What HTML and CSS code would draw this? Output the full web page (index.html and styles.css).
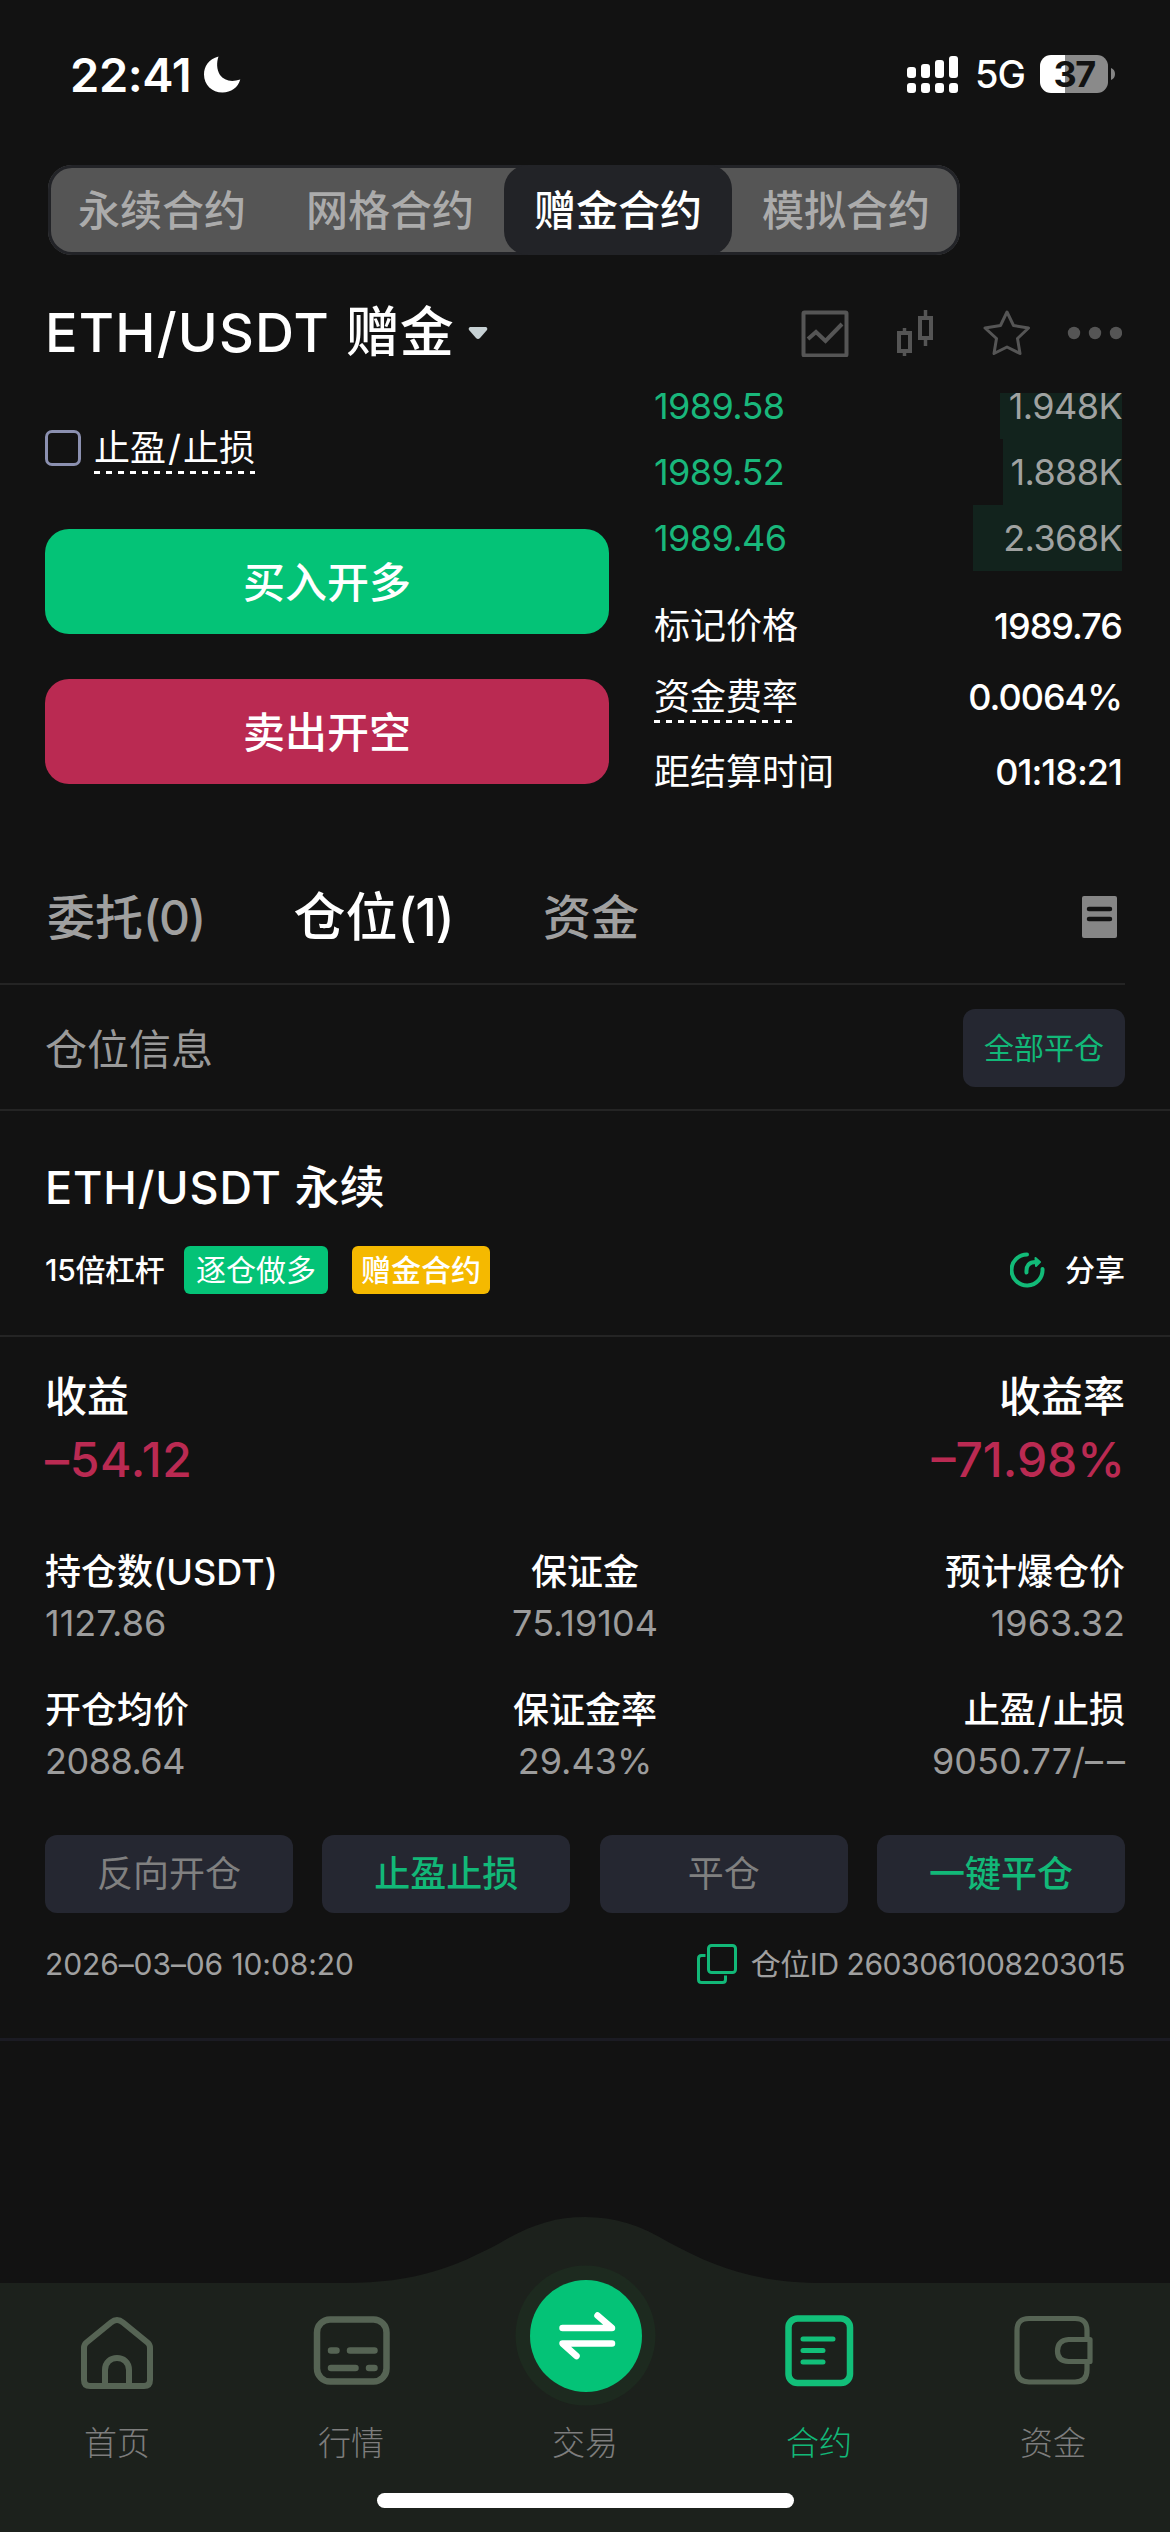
FILE: index.html
```html
<!DOCTYPE html>
<html lang="zh-CN">
<head>
<meta charset="utf-8">
<title>ETH/USDT 赠金合约</title>
<link rel="stylesheet" href="styles.css">
</head>
<body>
<div class="screen">
  <header class="status">
    <div class="status-left">
      <span class="clock">22:41</span>
      <svg class="moon" width="37" height="37" viewBox="0 0 37 37"><path fill="#fff" d="M14.5 0.6C4.5 3 0 11 0 18.500C0 29 8 36.500 18.500 36.500C27 36.500 34 31.500 36.300 23.500C27 26.500 20 24.500 16 19C12.500 13.500 12.500 6.500 14.500 0.600Z"/></svg>
    </div>
    <div class="status-right">
      <svg class="signal" width="52" height="38" viewBox="0 0 52 38" fill="#fff">
        <rect x="0" y="12" width="9" height="11" rx="3"/><rect x="14" y="9" width="9" height="14" rx="3"/><rect x="28" y="5" width="9" height="18" rx="3"/><rect x="42" y="1" width="9" height="22" rx="3"/>
        <rect x="0" y="28" width="9" height="10" rx="3"/><rect x="14" y="28" width="9" height="10" rx="3"/><rect x="28" y="28" width="9" height="10" rx="3"/><rect x="42" y="28" width="9" height="10" rx="3"/>
      </svg>
      <span class="network">5G</span>
      <span class="battery">37</span>
      <svg class="battery-nub" width="4" height="12" viewBox="0 0 4 12"><path d="M0 0Q4 1.500 4 6T0 12Z" fill="#858585"/></svg>
    </div>
  </header>

  <nav class="segments">
    <span class="segment">永续合约</span><span class="segment">网格合约</span><span class="segment active">赠金合约</span><span class="segment">模拟合约</span>
  </nav>

  <section class="pair">
    <h1 class="pair-name">ETH/USDT <span>赠金</span></h1>
    <svg class="caret" width="20" height="12" viewBox="0 0 20 12"><path d="M2 0H18Q20 1 19 3L12 11Q10 13 8 11L1 3Q0 1 2 0Z" fill="#c6d0d3"/></svg>
    <svg class="tools" width="322" height="48" viewBox="0 0 322 48" fill="none" stroke="#555">
      <rect x="3.500" y="3.500" width="43" height="43" rx="1" stroke-width="4"/>
      <path d="M8 30L16 23L25.500 32L42 15" stroke-width="4"/>
      <path d="M104.500 19V23M104.500 43V47M125.500 1V8M125.500 30V37" stroke-width="3.500"/>
      <rect x="99" y="24" width="11" height="18" stroke-width="4"/><rect x="120" y="9" width="11" height="20" stroke-width="4"/>
      <path d="M207 3L213.500 16.500L228.500 19L217.500 29.500L220 44.500L207 38L194 44.500L196.500 29.500L185 19L200.500 16.500Z" stroke-width="3" stroke-linejoin="round"/>
      <g fill="#555" stroke="none"><circle cx="274" cy="24" r="6.200"/><circle cx="295" cy="24" r="6.200"/><circle cx="316" cy="24" r="6.200"/></g>
    </svg>
  </section>

  <section class="trade">
    <div class="order">
      <label class="tpsl"><span class="box"></span><span class="dashed">止盈<span class="slash">/</span>止损</span></label>
      <button class="big buy">买入开多</button>
      <button class="big sell">卖出开空</button>
    </div>
    <div class="book">
      <div class="depth">
        <div class="level"><span class="price">1989.58</span><span class="amount" style="width:122px">1.948K</span></div>
        <div class="level"><span class="price">1989.52</span><span class="amount" style="width:119px">1.888K</span></div>
        <div class="level"><span class="price">1989.46</span><span class="amount" style="width:149px">2.368K</span></div>
      </div>
      <dl class="facts">
        <div><dt>标记价格</dt><dd>1989.76</dd></div>
        <div><dt class="dashed">资金费率</dt><dd class="rate">0.0064%</dd></div>
        <div><dt>距结算时间</dt><dd class="timer">01:18:21</dd></div>
      </dl>
    </div>
  </section>

  <nav class="tabs">
    <span class="tab">委托<span class="count">(0)</span></span><span class="tab current">仓位<span class="count">(1)</span></span><span class="tab">资金</span>
    <svg width="35" height="42" viewBox="0 0 35 42"><rect width="35" height="42" rx="2" fill="#868686"/><path d="M7 13H28M7 23H28" stroke="#121212" stroke-width="4.500" stroke-linecap="round"/></svg>
  </nav>

  <section class="summary"><span class="summary-title">仓位信息</span><button class="close-all">全部平仓</button></section>

  <section class="position-head">
    <h2>ETH/USDT <span>永续</span></h2>
    <div class="meta">
      <span class="lever">15倍杠杆</span><span class="tag long">逐仓做多</span><span class="tag bonus">赠金合约</span>
      <span class="share"><svg width="35" height="36" viewBox="0 0 35 36" fill="none" stroke="#12bb78" stroke-width="4" stroke-linecap="round" stroke-linejoin="round"><path d="M17 2.500A15.500 15.500 0 1 0 32.500 17"/><path d="M16.500 20.500C16 13.500 19 10 26 10"/><path d="M25.500 6L30 10L26 14Z" fill="#12bb78" stroke-width="2"/></svg>分享</span>
    </div>
  </section>

  <section class="position">
    <div class="profit">
      <div><h3>收益</h3><p class="gain">–54.12</p></div>
      <div><h3>收益率</h3><p>–71.98%</p></div>
    </div>
    <dl class="stats">
      <div><dt>持仓数(USDT)</dt><dd>1127.86</dd></div>
      <div><dt>保证金</dt><dd>75.19104</dd></div>
      <div><dt>预计爆仓价</dt><dd>1963.32</dd></div>
      <div><dt>开仓均价</dt><dd class="entry">2088.64</dd></div>
      <div><dt>保证金率</dt><dd>29.43%</dd></div>
      <div><dt>止盈<span class="slash">/</span>止损</dt><dd>9050.77/<span class="unset">––</span></dd></div>
    </dl>
    <div class="actions">
      <button>反向开仓</button><button class="on">止盈止损</button><button>平仓</button><button class="on">一键平仓</button>
    </div>
    <div class="foot">
      <time>2026–03–06 10:08:20</time>
      <span class="pid"><svg width="40" height="40" viewBox="0 0 40 40" fill="none" stroke="#12b878" stroke-width="3"><rect x="11.500" y="1.500" width="27" height="27" rx="3"/><path d="M8.500 11.500H4.500Q1.500 11.500 1.500 14.500V35.500Q1.500 38.500 4.500 38.500H25.500Q28.500 38.500 28.500 35.500V31.500"/></svg>仓位ID 2603061008203015</span>
    </div>
  </section>

  <footer class="dock">
    <svg class="dock-bg" width="1170" height="315" viewBox="0 0 1170 315">
      <path fill="#1c211c" d="M0 66H345C415 66 455 50 500 26C530 8 555 0 585 0C615 0 640 8 670 26C715 50 755 66 825 66H1170V315H0Z"/>
      <circle cx="585.500" cy="118.500" r="70" fill="#1d2a1f"/>
    </svg>
    <div class="dock-items">
      <a class="item"><svg width="80" height="80" viewBox="0 0 80 80" fill="none" stroke="#566454" stroke-width="6"><path d="M34 9.500Q40 4.500 46 9.500L70.500 29.500Q73 31.500 73 35V67Q73 73 67 73H13Q7 73 7 67V35Q7 31.500 9.500 29.500Z"/><path d="M28 73V57C28 41 52 41 52 57V73"/></svg>首页</a>
      <a class="item"><svg width="80" height="80" viewBox="0 0 80 80" fill="none" stroke="#566454"><rect x="6" y="6.500" width="69.500" height="62" rx="13" stroke-width="6.500"/><path d="M20 37.500H25.500M39 37.500H63.500M20 55H44.500M58 55H63.500" stroke-width="6.500" stroke-linecap="round"/></svg>行情</a>
      <a class="item trade-item"><svg width="114" height="112" viewBox="0 0 114 112"><circle cx="58" cy="56" r="56" fill="#04c377"/><path d="M34.500 48H84L69.500 35.500M84 63.500H34.500L48.500 76" fill="none" stroke="#fff" stroke-width="6.500" stroke-linecap="round" stroke-linejoin="round"/></svg>交易</a>
      <a class="item selected"><svg width="80" height="80" viewBox="0 0 80 80" fill="none" stroke="#12bf79"><rect x="9.500" y="5.500" width="61.500" height="64.500" rx="9" stroke-width="6.500"/><path d="M24 26H54M24 37.500H44M24 49H44" stroke-width="5" stroke-linecap="round"/></svg>合约</a>
      <a class="item"><svg width="80" height="80" viewBox="0 0 80 80" fill="none" stroke="#566454" stroke-width="5.200"><path d="M74 26V17.500Q74 5.500 62 5.500H16Q4 5.500 4 17.500V57Q4 69 16 69H62Q74 69 74 57V49"/><path d="M77 26.500H55.500Q44.500 27.500 44.500 38Q44.500 48 55.500 48.500H77Z" stroke-linejoin="round"/></svg>资金</a>
    </div>
    <div class="home-bar"></div>
  </footer>
</div>
</body>
</html>
```

FILE: styles.css
```css
* { box-sizing: border-box; margin: 0; padding: 0; }
body { background: #121212; color: #fff; font-family: Inter, "Noto Sans CJK SC", sans-serif; font-size: 36px; line-height: 1; }
button { border: 0; color: inherit; font: inherit; }
svg { display: block; flex: none; }
.screen { display: flex; flex-direction: column; width: 1170px; height: 2532px; overflow: hidden; white-space: nowrap; }

.status { display: flex; justify-content: space-between; height: 165px; padding: 55px 55px 0 70px; }
.status-left, .status-right { display: flex; height: 38px; align-items: center; }
.clock { width: 134px; font-size: 47px; font-weight: 600; letter-spacing: -0.4px; }
.network { flex: none; width: 81px; padding-left: 16px; font-size: 38px; letter-spacing: -1px; font-weight: 500; }
.battery { flex: none; width: 68px; height: 38px; border-radius: 11px; background: linear-gradient(90deg, #fff 25px, #8a8a8a 25px); color: #121212; font-size: 36px; font-weight: 700; letter-spacing: -1.5px; line-height: 38px; text-align: center; }
.battery-nub { margin-left: 3px; }

.segments { display: flex; width: 912px; height: 90px; margin-left: 48px; border-radius: 24px; background: #555; box-shadow: inset 0 0 0 3px #222327; }
.segment { width: 228px; height: 90px; padding-top: 1px; color: #ababab; font-size: 42px; font-weight: 500; line-height: 90px; text-align: center; }
.segment.active { border-radius: 24px; background: #222327; color: #fff; }

.pair { display: flex; align-items: center; height: 135px; padding: 21px 48px 0 45px; }
.pair-name { width: 423px; font-size: 54px; font-weight: 500; letter-spacing: 1.2px; }
.pair-name span { letter-spacing: 0; }
.tools { margin-left: 312px; }

.trade { display: flex; justify-content: space-between; height: 465px; padding: 0 48px 0 45px; }
.order { width: 564px; padding-top: 40px; }
.tpsl { display: flex; align-items: center; gap: 13px; height: 36px; margin-bottom: 63px; }
.box { width: 36px; height: 36px; border: 3px solid #8b90b0; border-radius: 7px; }
.slash { padding: 0 2px; }
.dashed { position: relative; }
.dashed::after { content: ""; position: absolute; left: 0; right: 0; bottom: -8px; height: 3px; background: repeating-linear-gradient(90deg, #fff 0 6px, transparent 6px 12px); }
.big { display: block; width: 564px; height: 105px; margin-bottom: 45px; padding-top: 3px; border-radius: 24px; font-size: 42px; font-weight: 500; }
.buy { background: #04c377; }
.sell { background: #ba2a52; }
.book { width: 468px; padding-top: 3px; }
.level { display: flex; justify-content: space-between; height: 66px; line-height: 67px; letter-spacing: -0.6px; }
.level:first-child { height: 46px; line-height: 27px; }
.price { color: #19b77b; }
.amount { background: #12231d; color: #a0a2a1; text-align: right; }
.facts { padding-top: 37px; }
.facts > div { display: flex; justify-content: space-between; height: 36px; margin-bottom: 35px; line-height: 36px; }
.facts > div:nth-child(2) { margin-bottom: 39px; }
.facts dd { font-weight: 500; letter-spacing: -1px; }

.tabs { display: flex; align-items: center; height: 130px; width: 1125px; padding: 0 8px 4px 47px; border-bottom: 2px solid #242424; }
.tab { padding-top: 2px; color: #a0a0a0; font-size: 48px; font-weight: 500; }
.count { letter-spacing: -1.6px; }
.tab.current { margin: 0 90px 0 89px; color: #fff; font-size: 52px; }
.tabs svg { margin-left: auto; }

.summary { display: flex; align-items: center; justify-content: space-between; height: 126px; padding: 2px 45px 0; border-bottom: 2px solid #242424; color: #9a9a9a; font-size: 42px; }
.summary-title { padding-top: 3px; }
.close-all { width: 162px; height: 78px; border-radius: 12px; background: #252731; color: #12b878; font-size: 30px; }

.position-head { height: 226px; padding: 54px 45px 0; border-bottom: 2px solid #242424; }
.position-head h2 { font-size: 45px; font-weight: 500; letter-spacing: 0.9px; }
.position-head h2 span { letter-spacing: 0; }
.meta { display: flex; align-items: center; height: 48px; margin-top: 36px; font-size: 30px; font-weight: 500; }
.lever { width: 139px; letter-spacing: -0.3px; }
.tag { height: 48px; border-radius: 6px; line-height: 48px; text-align: center; }
.long { width: 144px; margin-right: 24px; background: #04c377; font-weight: 400; }
.bonus { width: 138px; background: #f5b900; }
.share { display: flex; align-items: center; gap: 20px; margin-left: auto; }

.position { height: 704px; padding: 39px 45px 0; border-bottom: 3px solid #1b1b23; }
.profit { display: flex; justify-content: space-between; }
.profit h3 { font-size: 42px; font-weight: 500; }
.profit p { margin-top: 18px; color: #ba2a52; font-size: 48px; font-weight: 500; }
.profit .gain { letter-spacing: 0.7px; }
.profit div:last-child { text-align: right; }
.stats { display: grid; grid-template-columns: repeat(3, 360px); row-gap: 51px; margin-top: 70px; }
.stats div:nth-child(3n+2) { text-align: center; }
.stats div:nth-child(3n) { text-align: right; }
.stats dt { font-weight: 500; }
.stats dd { margin-top: 15px; color: #9c9c9c; }
.stats .entry { letter-spacing: -0.5px; }
.unset { letter-spacing: 4px; margin-right: -4px; }
.actions { display: flex; justify-content: space-between; margin-top: 56px; }
.actions button { width: 248px; height: 78px; border-radius: 12px; background: #252731; color: #808080; }
.actions .on { color: #12b878; font-weight: 500; }
.foot { display: flex; align-items: center; justify-content: space-between; height: 40px; margin-top: 31px; color: #a0a0a0; font-size: 30px; letter-spacing: -0.1px; }
.pid { display: flex; align-items: center; gap: 14px; letter-spacing: -0.45px; }

.dock { position: relative; height: 315px; margin-top: auto; }
.dock-bg { position: absolute; left: 0; top: 0; }
.dock-items { position: relative; display: flex; height: 276px; padding-top: 96px; }
.item { display: flex; flex-direction: column; align-items: center; width: 234px; gap: 34px; color: #7d7d7d; font-size: 33px; font-weight: 300; }
.trade-item { margin-top: -33px; gap: 35px; }
.selected { color: #12b878; }
.home-bar { position: relative; width: 417px; height: 15px; margin: 0 auto; border-radius: 8px; background: #fff; }
```
